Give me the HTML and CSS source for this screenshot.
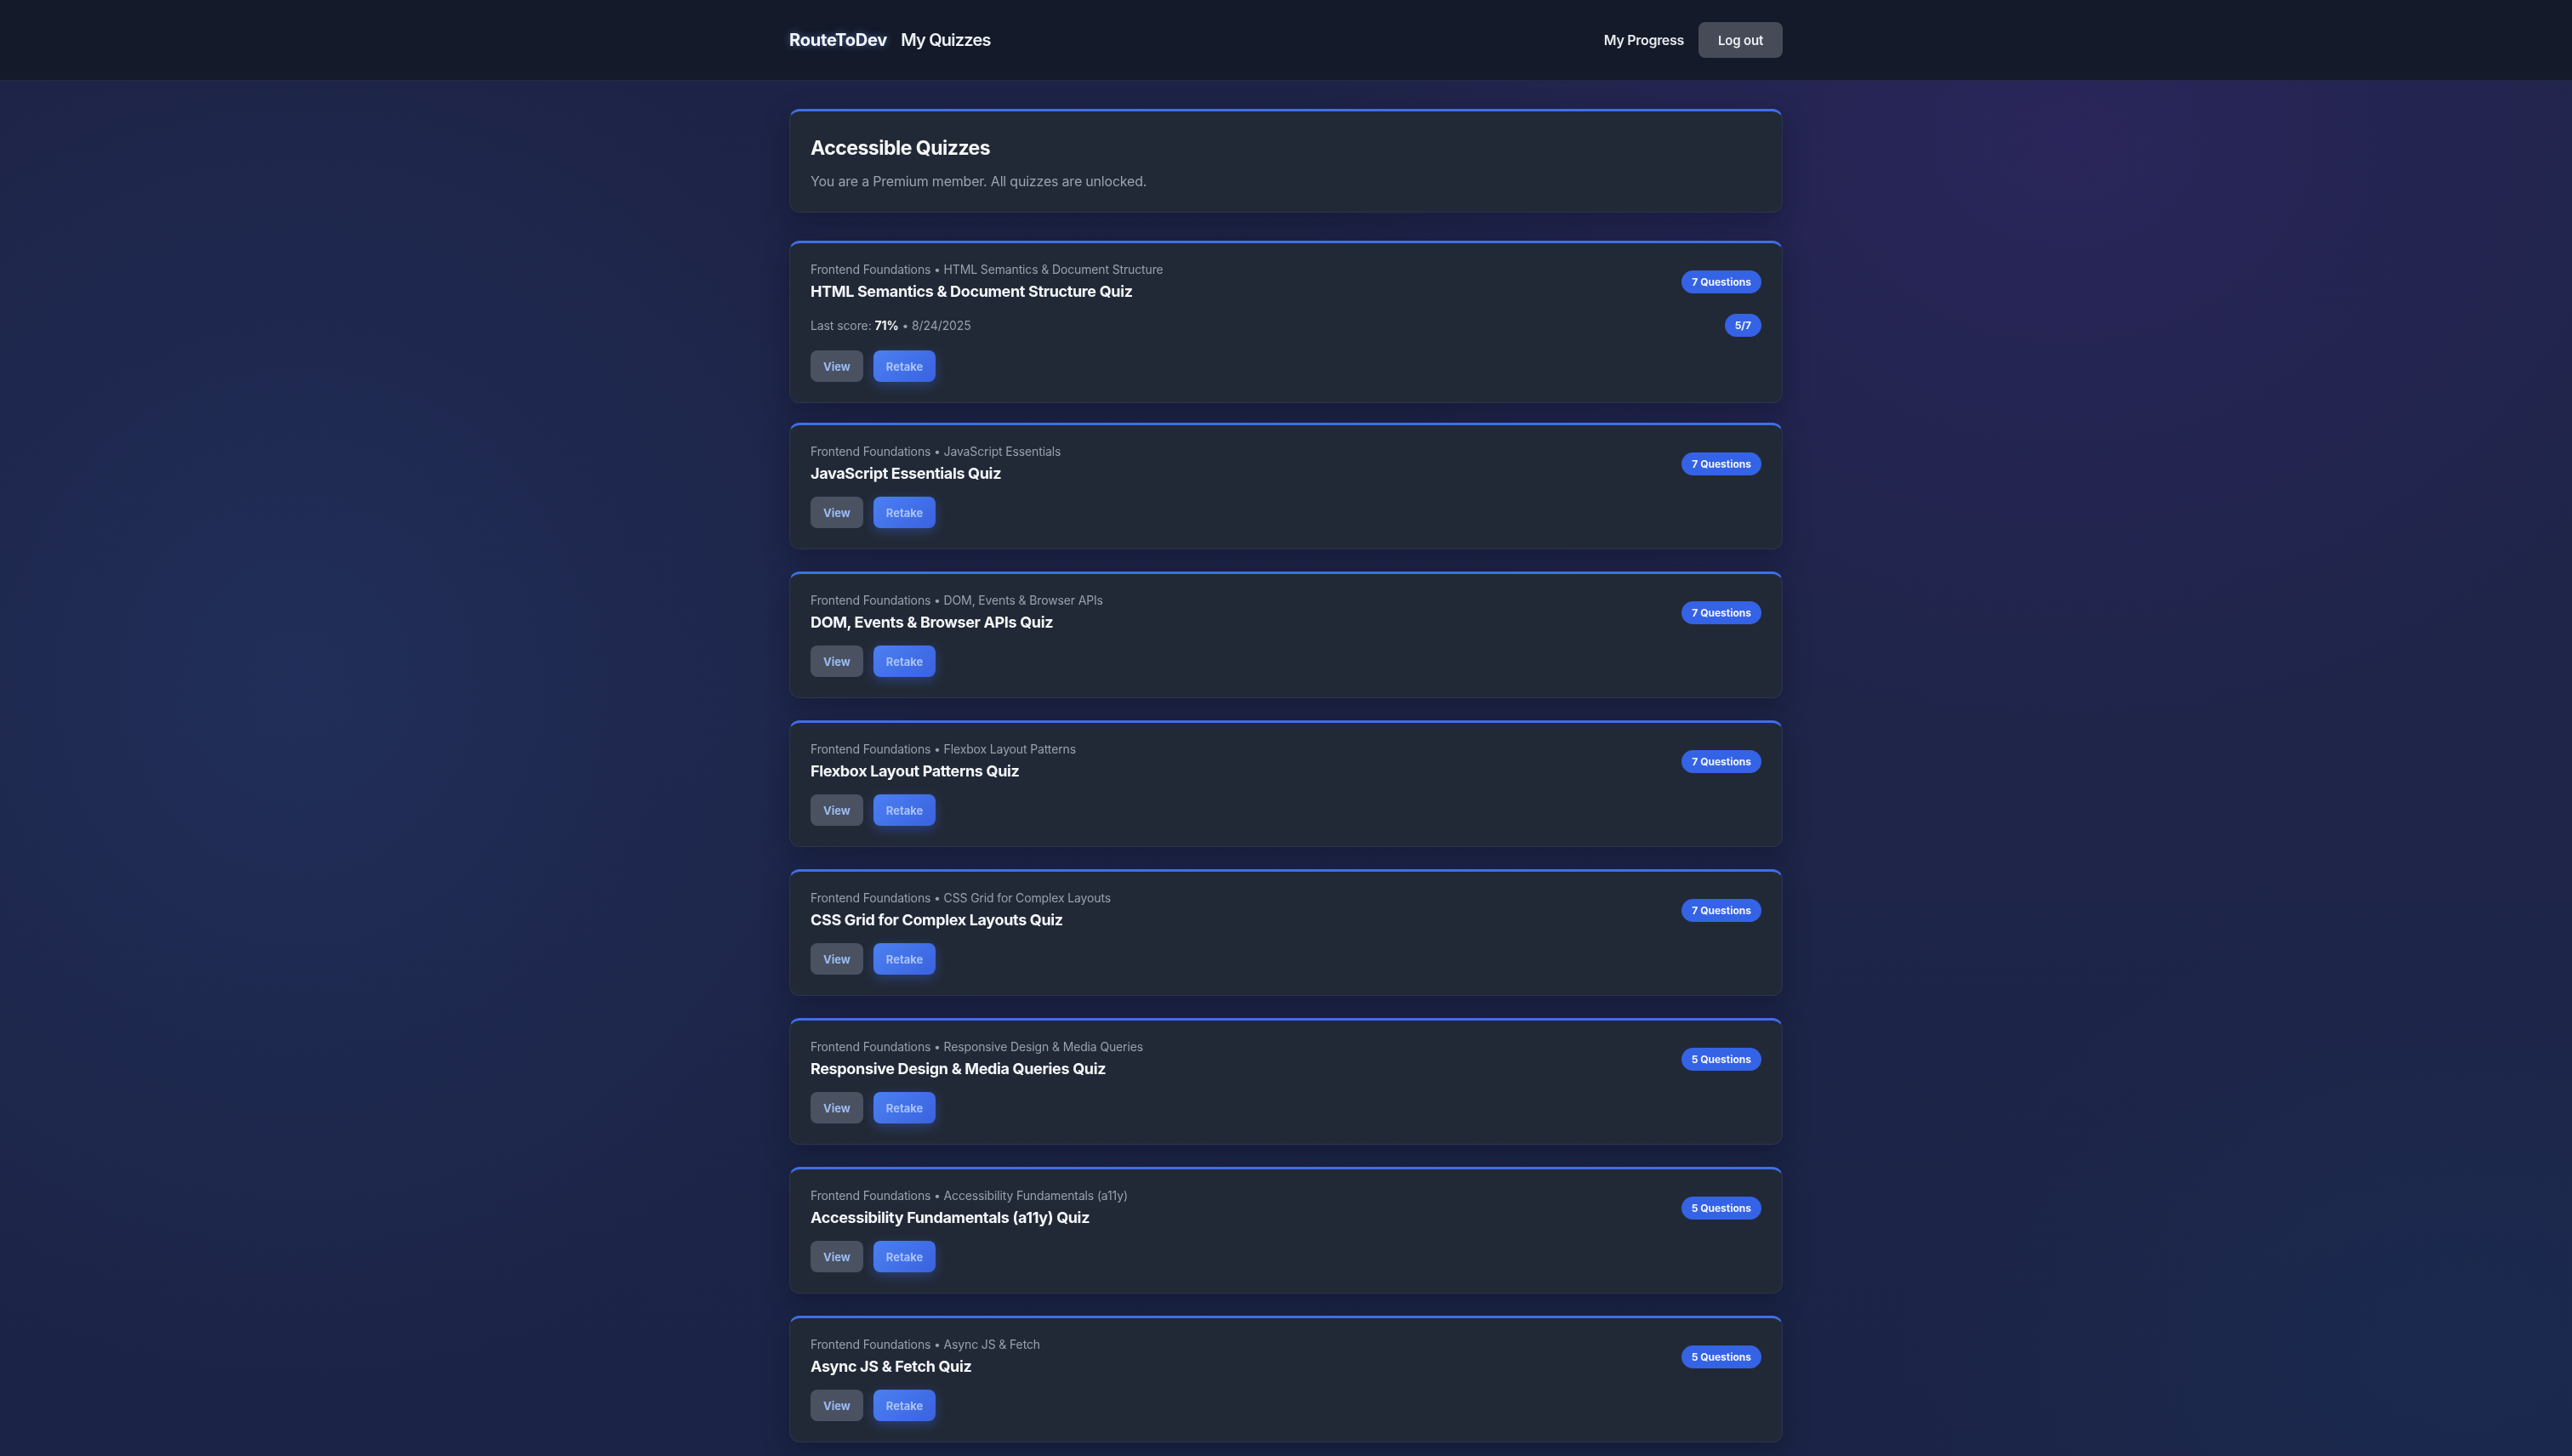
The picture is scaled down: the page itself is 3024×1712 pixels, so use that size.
FILE: index.html
```html
<!DOCTYPE html>
<html lang="en">
<head>
<meta charset="utf-8">
<title>My Quizzes - RouteToDev</title>
<link rel="stylesheet" href="styles.css">
</head>
<body>
<header class="topbar">
  <div class="topbar-inner">
    <div class="brand-group">
      <a class="brand" href="#">RouteToDev</a>
      <span class="page-name">My Quizzes</span>
    </div>
    <nav class="top-nav">
      <a class="nav-link" href="#">My Progress</a>
      <button class="btn-logout">Log out</button>
    </nav>
  </div>
</header>

<main class="container">
  <section class="intro-card">
    <h1 class="intro-title">Accessible Quizzes</h1>
    <p class="intro-text">You are a Premium member. All quizzes are unlocked.</p>
  </section>

  <article class="quiz-card quiz-card-first">
    <div class="quiz-head">
      <div>
        <div class="quiz-meta">Frontend Foundations • HTML Semantics &amp; Document Structure</div>
        <h2 class="quiz-title">HTML Semantics &amp; Document Structure Quiz</h2>
      </div>
      <span class="pill">7 Questions</span>
    </div>
    <div class="score-row">
      <div class="score-text">Last score: <strong>71%</strong> • 8/24/2025</div>
      <span class="pill">5/7</span>
    </div>
    <div class="actions actions-after-score">
      <button class="btn btn-view">View</button>
      <button class="btn btn-retake">Retake</button>
    </div>
  </article>

  <article class="quiz-card">
    <div class="quiz-head">
      <div>
        <div class="quiz-meta">Frontend Foundations • JavaScript Essentials</div>
        <h2 class="quiz-title">JavaScript Essentials Quiz</h2>
      </div>
      <span class="pill">7 Questions</span>
    </div>
    <div class="actions">
      <button class="btn btn-view">View</button>
      <button class="btn btn-retake">Retake</button>
    </div>
  </article>

  <article class="quiz-card">
    <div class="quiz-head">
      <div>
        <div class="quiz-meta">Frontend Foundations • DOM, Events &amp; Browser APIs</div>
        <h2 class="quiz-title">DOM, Events &amp; Browser APIs Quiz</h2>
      </div>
      <span class="pill">7 Questions</span>
    </div>
    <div class="actions">
      <button class="btn btn-view">View</button>
      <button class="btn btn-retake">Retake</button>
    </div>
  </article>

  <article class="quiz-card">
    <div class="quiz-head">
      <div>
        <div class="quiz-meta">Frontend Foundations • Flexbox Layout Patterns</div>
        <h2 class="quiz-title">Flexbox Layout Patterns Quiz</h2>
      </div>
      <span class="pill">7 Questions</span>
    </div>
    <div class="actions">
      <button class="btn btn-view">View</button>
      <button class="btn btn-retake">Retake</button>
    </div>
  </article>

  <article class="quiz-card">
    <div class="quiz-head">
      <div>
        <div class="quiz-meta">Frontend Foundations • CSS Grid for Complex Layouts</div>
        <h2 class="quiz-title">CSS Grid for Complex Layouts Quiz</h2>
      </div>
      <span class="pill">7 Questions</span>
    </div>
    <div class="actions">
      <button class="btn btn-view">View</button>
      <button class="btn btn-retake">Retake</button>
    </div>
  </article>

  <article class="quiz-card">
    <div class="quiz-head">
      <div>
        <div class="quiz-meta">Frontend Foundations • Responsive Design &amp; Media Queries</div>
        <h2 class="quiz-title">Responsive Design &amp; Media Queries Quiz</h2>
      </div>
      <span class="pill">5 Questions</span>
    </div>
    <div class="actions">
      <button class="btn btn-view">View</button>
      <button class="btn btn-retake">Retake</button>
    </div>
  </article>

  <article class="quiz-card">
    <div class="quiz-head">
      <div>
        <div class="quiz-meta">Frontend Foundations • Accessibility Fundamentals (a11y)</div>
        <h2 class="quiz-title">Accessibility Fundamentals (a11y) Quiz</h2>
      </div>
      <span class="pill">5 Questions</span>
    </div>
    <div class="actions">
      <button class="btn btn-view">View</button>
      <button class="btn btn-retake">Retake</button>
    </div>
  </article>

  <article class="quiz-card">
    <div class="quiz-head">
      <div>
        <div class="quiz-meta">Frontend Foundations • Async JS &amp; Fetch</div>
        <h2 class="quiz-title">Async JS &amp; Fetch Quiz</h2>
      </div>
      <span class="pill">5 Questions</span>
    </div>
    <div class="actions">
      <button class="btn btn-view">View</button>
      <button class="btn btn-retake">Retake</button>
    </div>
  </article>
</main>
<div class="bottom-wedge"></div>
</body>
</html>
```
FILE: styles.css
```css
* { box-sizing: border-box; }

html {
  background: #181d33;
}

body {
  margin: 0;
  min-height: 100vh;
  font-family: Inter, "Noto Sans", "Liberation Sans", sans-serif;
  color: #f1f5f9;
  background:
    radial-gradient(ellipse 1200px 1000px at 2430px 160px, rgba(44, 38, 94, 0.85), transparent 75%),
    radial-gradient(ellipse 1000px 1100px at 350px 800px, rgba(34, 52, 100, 0.6), transparent 75%),
    radial-gradient(ellipse 900px 700px at 2900px 1600px, rgba(26, 44, 84, 0.6), transparent 75%),
    linear-gradient(180deg, #1d2346 0%, #1e2548 50%, #1b2446 100%);
  background-attachment: fixed;
}

.topbar {
  height: 95px;
  background: #141a29;
  border-bottom: 1px solid #222a42;
}

.topbar-inner {
  width: 1168px;
  height: 100%;
  margin: 0 auto;
  display: flex;
  align-items: center;
  justify-content: space-between;
}

.brand-group {
  display: flex;
  align-items: center;
  gap: 16px;
}

.brand {
  font-size: 20px;
  font-weight: 700;
  color: #f4f6fa;
  text-decoration: none;
  letter-spacing: -0.2px;
  text-shadow: 0 0 8px rgba(120, 160, 255, 0.55);
}

.page-name {
  font-size: 20px;
  font-weight: 600;
  color: #eef1f6;
  letter-spacing: -0.8px;
}

.top-nav {
  display: flex;
  align-items: center;
  gap: 17px;
}

.nav-link {
  font-size: 16px;
  font-weight: 600;
  color: #e8eaef;
  text-decoration: none;
  letter-spacing: -0.3px;
}

.btn-logout {
  height: 42px;
  padding: 0 23px;
  border: 0;
  border-radius: 8px;
  background: #464b57;
  color: #eef0f4;
  font-family: inherit;
  font-size: 15px;
  font-weight: 600;
  letter-spacing: -0.2px;
}

.container {
  width: 1168px;
  margin: 0 auto;
  padding: 33px 0 40px;
}

.intro-card,
.quiz-card {
  background: #222936;
  border: 1px solid #2a3450;
  border-top: 3px solid #3f6fe6;
  border-radius: 12px;
  box-shadow: 0 10px 30px rgba(8, 12, 28, 0.35);
}

.intro-card {
  padding: 29px 24px 24px;
  margin-bottom: 33px;
}

.intro-title {
  margin: 0;
  font-size: 23px;
  line-height: 29px;
  font-weight: 700;
  color: #f5f7fa;
  letter-spacing: -0.5px;
}

.intro-text {
  margin: 12px 0 0;
  font-size: 16px;
  line-height: 24px;
  color: #9ca3af;
  letter-spacing: -0.2px;
}

.quiz-card {
  padding: 21px 24px 24px;
  margin-bottom: 26px;
}

.quiz-card-first {
  margin-bottom: 23px;
}

.quiz-head {
  display: flex;
  align-items: center;
  justify-content: space-between;
}

.quiz-meta {
  font-size: 14px;
  line-height: 20px;
  color: #9aa1ad;
  letter-spacing: -0.14px;
}

.quiz-title {
  margin: 3px 0 0;
  font-size: 18px;
  line-height: 26px;
  font-weight: 700;
  color: #f5f7fa;
  letter-spacing: -0.35px;
}

.pill {
  display: inline-flex;
  align-items: center;
  height: 27px;
  padding: 0 12px;
  border-radius: 999px;
  background: #3563e6;
  color: #f4f7ff;
  font-size: 12px;
  font-weight: 700;
  white-space: nowrap;
}

.score-row {
  margin-top: 13px;
  display: flex;
  align-items: center;
  justify-content: space-between;
}

.score-text {
  font-size: 14px;
  line-height: 20px;
  color: #9aa1ad;
  letter-spacing: -0.1px;
}

.score-text strong {
  color: #f5f7fa;
  font-weight: 700;
}

.actions {
  margin-top: 14px;
  display: flex;
  gap: 12px;
}

.actions-after-score {
  margin-top: 16px;
}

.btn {
  height: 37px;
  padding: 0 15px;
  border: 0;
  border-radius: 8px;
  font-family: inherit;
  font-size: 13px;
  font-weight: 700;
}

.btn-view {
  background: #4a5161;
  color: #9cbcf2;
}

.btn-retake {
  background: linear-gradient(135deg, #4b80f1 0%, #3a62df 100%);
  color: #a9c3f6;
  box-shadow: 0 4px 14px rgba(59, 110, 240, 0.35);
}

.bottom-wedge {
  position: fixed;
  left: 0;
  bottom: 0;
  width: 2200px;
  height: 36px;
  background: #181d33;
  clip-path: polygon(0 0, 100% 100%, 0 100%);
  pointer-events: none;
  z-index: -1;
}
```
